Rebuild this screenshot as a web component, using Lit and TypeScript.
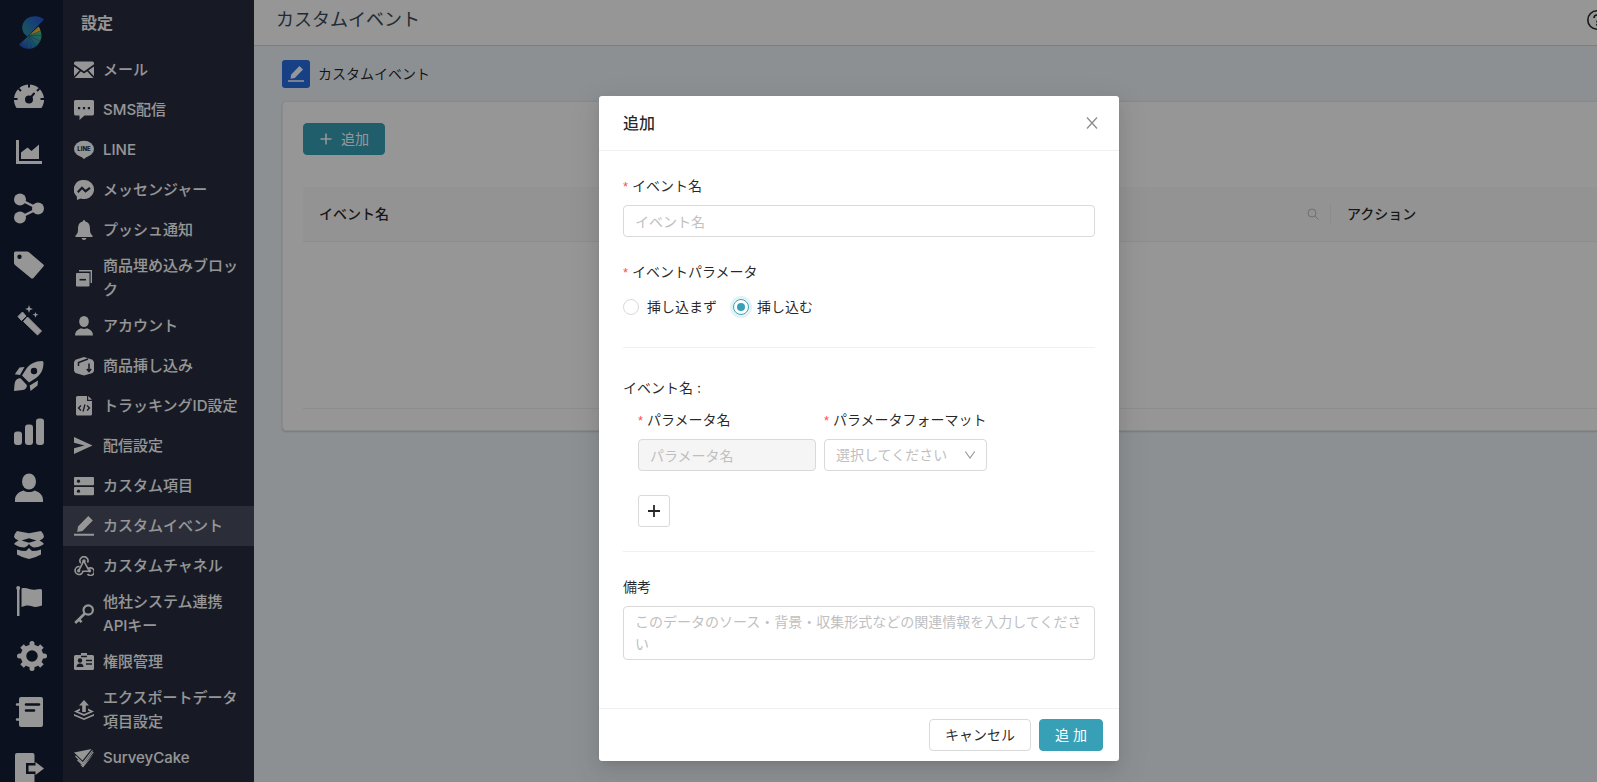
import { LitElement, html, css, svg } from "lit";
import { customElement, property, state } from "lit/decorators.js";

/* Glyphs: "cut" parts take the colour of the surface behind the icon. */
const rail = {
  gauge: svg`<path d="M2.600 27A15 15 0 1 1 27.400 27Z"/><path class="cutline" stroke-width="2" d="M15 2v4.500M0 18h3.500M26.500 18H30M4.600 7.600l2.400 2.400M25.400 7.600 23 10"/><circle class="cut" cx="15" cy="18.500" r="4"/><path class="cutline" stroke-width="2" stroke-linecap="round" d="M15 18.500 20 12.500"/>`,
  area: svg`<path d="M2 3h3v21h23v3H2Z"/><path d="M7 22V15.500L13.500 10.500 17.500 14 25 7.500V22Z"/>`,
  share: svg`<circle cx="6" cy="6.500" r="6"/><circle cx="6" cy="24.500" r="6"/><circle cx="24" cy="15.500" r="6"/><path class="line" stroke-width="2.500" d="M6 6.500 24 15.500 6 24.500"/>`,
  tag: svg`<path fill-rule="evenodd" d="M1.500 2.500H13a3 3 0 0 1 2 .8L29.400 15.500a1.500 1.500 0 0 1 0 2L19.500 29a2 2 0 0 1-2.700 0L1 16a3 3 0 0 1-1-2.200V4a1.500 1.500 0 0 1 1.500-1.500ZM5.500 5.500a2.200 2.200 0 1 0 0 4.400 2.200 2.200 0 0 0 0-4.400Z"/>`,
  wand: svg`<path d="M4 11.500 8.500 7l3.500 4-4.500 4.500ZM13.500 12 27.500 26l-4 4L9.500 16.500Z" stroke="currentColor" stroke-linejoin="round"/><path d="M15 0l1 3 3 1-3 1-1 3-1-3-3-1 3-1ZM21.500 7l.8 2 2.200.8-2.200.8-.8 2.200-.8-2.200-2.200-.8 2.200-.8Z"/>`,
  rocket: svg`<path fill-rule="evenodd" d="M28 0c-7 .2-11.500 2.500-15.500 7.500L8 14.500l7 7 7-4.500C27.500 13 29.500 8 29.500 1.500Q29.500 0 28 0ZM20 6.800a3.200 3.200 0 1 1 0 6.400 3.200 3.200 0 0 1 0-6.400Z"/><path d="M10.500 6 6 14 .8 13.200 5.500 6.500ZM24 19.500l-.5 5-7 5.500-.8-5.500ZM6.500 17.200 12.800 24c.5 2.700-1.300 4.500-4 5L0 30c.3-3 .3-6 1-9 .8-2.600 3-4 5.500-3.800Z"/>`,
  bars: svg`<rect x="0" y="14.500" width="8" height="13.500" rx="3"/><rect x="11" y="7.500" width="8" height="20.500" rx="3"/><rect x="22" y="1.500" width="8" height="26.500" rx="3"/>`,
  user: svg`<ellipse cx="15" cy="8.500" rx="7" ry="8"/><path d="M1 29v-2c0-4.500 3-8 8.500-9.500 3 2 8 2 11 0C26 19 29 22.500 29 27v2Z"/>`,
  box: svg`<path fill-rule="evenodd" d="M3 2 15 4.200 27 2Q30 5 30 8 29 10 25.500 11.500 29 13 30 15 25 18.500 19.500 18.500 16.500 17.500 15 15 13.500 17.500 10.500 18.500 5 18.500 0 15 1 13 4.500 11.500 1 10 0 8 0 5 3 2ZM7.500 11.500 15 13.800l7.500-2.300L15 9.200Z"/><path d="M3 20.500q4 1.500 9 1.500l3-3 3 3q5 0 9-1.500v5q-5 3-12 4.500-7-1.500-12-4.500Z"/>`,
  flag: svg`<path d="M3 3.500h2.500V31H3Z"/><circle cx="4.200" cy="3" r="2"/><path d="M7.500 3.500C13 1.500 17 6 22 4.500l4.500-.5Q28 4 28 5.500v15c-4 1.500-7 2-10 .8-4-1.600-7-.8-10.500.7Z"/>`,
  gear: svg`<g transform="translate(3 0)"><circle class="line" stroke-width="5.500" cx="15" cy="15" r="8.500"/><path class="line" stroke-width="5" stroke-linecap="round" d="M15 2.500v3M15 24.500v3M2.500 15h3M24.500 15h3"/><path class="line" stroke-width="5" d="M5 5l4 4M21 21l4 4M25 5l-4 4M9 21l-4 4"/></g>`,
  book: svg`<rect x="5" y="0" width="24" height="30" rx="2"/><path class="line" stroke-width="2.500" stroke-linecap="round" d="M3 7.500h4M3 22.500h4"/><path class="cutline" stroke-width="2.600" stroke-linecap="round" d="M12 7.500h13M12 13.500h8"/>`,
  exit: svg`<rect x="1" y="0" width="19.500" height="31" rx="2"/><path class="cut" d="M12 10h12v11H12Z"/><path d="M14.500 12.500h7V9L30 15.500 21.500 22v-3.500h-7Z"/>`,
};

const menu = {
  mail: svg`<rect x="0" y="1.500" width="20" height="16.500" rx="1.500"/><path class="cutline" stroke-width="1.700" d="M-.5 5 10 12.500 20.500 5M0 17.500 6.500 10.500M20 17.500 13.500 10.500"/>`,
  sms: svg`<path d="M1.500 0h17Q20 0 20 1.500v12Q20 15.500 18.500 15.500H10.500L5.500 20V15.500h-4Q0 15.500 0 13.500v-12Q0 0 1.500 0Z"/><path class="cut" d="M4 7h2.200v2.200H4ZM8.900 7h2.200v2.200H8.900ZM13.800 7H16v2.200h-2.200Z"/>`,
  line: svg`<ellipse cx="10" cy="9" rx="10" ry="8.200"/><path d="M4 14 16 14.500 10 19Z"/><text class="cut brand" x="10" y="11" text-anchor="middle">LINE</text>`,
  messenger: svg`<path d="M10 0a10 9.500 0 1 1-3.200 18.500L3 20l-.2-3.600A9.600 9.500 0 0 1 10 0Z"/><path class="cutline" stroke-width="2.200" d="M3.800 12.200 8 7.800l3.500 3.400 4.500-3.400"/>`,
  bell: svg`<path d="M10 0q1.300 0 1.300 1.600C15 2.500 16 5.500 16 9c0 4 .8 5 2.500 6.500V17h-17v-1.500C3.200 14 4 13 4 9c0-3.500 1-6.500 4.700-7.400Q8.700 0 10 0ZM7.500 18h5q-.5 2-2.500 2t-2.500-2Z"/>`,
  block: svg`<rect x="2" y="5" width="13.500" height="13.500" rx="1"/><path class="line" stroke-width="1.400" d="M5 2.800H17.300V15"/><path class="cutline" stroke-width="1.600" d="M5.500 11.700h6.500"/>`,
  account: svg`<ellipse cx="10" cy="5.500" rx="4.800" ry="5.500"/><path d="M1 19.500q0-5.500 6-7.300 3 1.500 6 0 6 1.800 6 7.300Z"/>`,
  product: svg`<path d="M10 1 18.500 3.800 20 6v9L18.500 17 10 19.500 1.500 17 0 15V6L1.500 3.800Z"/><path class="cutline" stroke-width="1.500" d="M4.500 10V6.500L14 3M15 7.500v8M12.800 13l2.200 2.500 2.200-2.500"/>`,
  file: svg`<path d="M3.500 0H13v5h5v13q0 1.500-1.500 1.500h-13Q2 19.500 2 18V1.500Q2 0 3.500 0ZM14.200 0 18 3.800h-3.800Z"/><path class="cutline" stroke-width="1.300" d="M7 9.500 4.500 12 7 14.500M13 9.500 15.500 12 13 14.500M11 8.500 9 15.500"/>`,
  send: svg`<path d="M0 1 18.500 9.500 0 18V12.200L10.500 9.500 0 6.800Z"/>`,
  server: svg`<rect x="0" y="1" width="20" height="8.300" rx="1"/><rect x="0" y="11" width="20" height="8.300" rx="1"/><circle class="cut" cx="4.500" cy="5.200" r="1.600"/><circle class="cut" cx="4.500" cy="15.200" r="1.600"/>`,
  edit: svg`<path d="M3.200 16 4 10.500 14.300 0 18.800 4.500 8.500 15ZM0 17.800h20v2H0Z"/>`,
  hook: svg`<g class="line" stroke-width="1.600"><path d="M6.800 7.200a4 4 0 1 1 6.700-.6M10 5.300l4 7.500a3.800 3.800 0 1 1-.5 5.200M9.500 4.500 8.500 7.500 5 14M5.500 10.500a4 4 0 1 0 3.500 4.700h6.500"/></g><circle cx="10" cy="5" r="1.700"/><circle cx="4.700" cy="14.700" r="1.700"/><circle cx="15.500" cy="14.700" r="1.700"/>`,
  key: svg`<circle class="line" stroke-width="2.200" cx="14.200" cy="6" r="4.700"/><path class="line" stroke-width="2.600" d="M10.800 9.500 1.200 19M5 15.500l2.600 2.600"/>`,
  badge: svg`<path d="M1.500 3H7V1h6v2h5.500Q20 3 20 4.500v12q0 1.500-1.500 1.500h-17Q0 18 0 16.500v-12Q0 3 1.500 3Z"/><path class="cutline" stroke-width="1.300" d="M7 4.500h6M12 8.500h6M12 12h6"/><circle class="cut" cx="6" cy="8.500" r="2.200"/><path class="cut" d="M2.500 15q0-3.500 3.500-3.500T9.500 15Z"/>`,
  export: svg`<path d="M10 0 15 5.500H11.800V12H8.200V5.500H5Z"/><path d="M6 8.500 0 11.500 10 16l10-4.500-6-3v2L16 11.500 10 14 4 11.500 6 10.500Z"/><path d="M0 14l10 4.300L20 14v1.800L10 20 0 15.800Z"/>`,
  cake: svg`<path d="M0 4.500 17.500 1 8.500 12.500Z"/><path class="line" stroke-width="1.200" d="M1.500 8 8.800 15 18.500 2.500M3.500 12 9 17 19.300 4"/><path d="M6 16.500l3 1L19.800 6 9 19.500Z"/>`,
};

type MenuRow = [keyof typeof menu, string];

const MENU: MenuRow[] = [
  ["mail", "メール"],
  ["sms", "SMS配信"],
  ["line", "LINE"],
  ["messenger", "メッセンジャー"],
  ["bell", "プッシュ通知"],
  ["block", "商品埋め込みブロック"],
  ["account", "アカウント"],
  ["product", "商品挿し込み"],
  ["file", "トラッキングID設定"],
  ["send", "配信設定"],
  ["server", "カスタム項目"],
  ["edit", "カスタムイベント"],
  ["hook", "カスタムチャネル"],
  ["key", "他社システム連携APIキー"],
  ["badge", "権限管理"],
  ["export", "エクスポートデータ項目設定"],
  ["cake", "SurveyCake"],
];

const RAIL: [keyof typeof rail, string][] = [
  ["gauge", "ダッシュボード"],
  ["area", "分析"],
  ["share", "ジャーニー"],
  ["tag", "タグ"],
  ["wand", "パーソナライズ"],
  ["rocket", "配信"],
  ["bars", "レポート"],
  ["user", "ユーザー"],
  ["box", "商品"],
  ["flag", "キャンペーン"],
  ["gear", "設定"],
  ["book", "ガイド"],
  ["exit", "ログアウト"],
];

const base = css`
  *,
  *::before,
  *::after {
    box-sizing: border-box;
  }
  :host {
    font-family: Inter, "Noto Sans CJK JP", sans-serif;
    font-size: 14px;
    line-height: 22px;
    color: rgba(0, 0, 0, 0.85);
  }
  button,
  input,
  select,
  textarea {
    font: inherit;
    color: inherit;
    margin: 0;
  }
  button {
    cursor: pointer;
  }
  svg {
    display: block;
    flex: none;
    fill: currentColor;
  }
  .line {
    fill: none;
    stroke: currentColor;
  }
  .cut {
    fill: var(--surface);
  }
  .cutline {
    fill: none;
    stroke: var(--surface);
  }
  .primary {
    background: #38a0b6;
    border-color: #38a0b6;
    color: #fff;
  }
  .btn {
    height: 32px;
    padding: 0 15px;
    border-width: 1px;
    border-style: solid;
    border-radius: 4px;
  }
`;

@customElement("side-nav")
export class SideNav extends LitElement {
  @property() active = "";

  static styles = [
    base,
    css`
      :host {
        display: flex;
        height: 100%;
        color: #fff;
      }
      .rail {
        --surface: #131d34;
        width: 63px;
        background: var(--surface);
        overflow: hidden;
      }
      .logo {
        padding: 15px 0 0 18px;
        height: 68px;
      }
      .rail a {
        display: flex;
        align-items: center;
        height: 56px;
        padding-left: 14px;
        color: inherit;
      }
      .rail svg {
        overflow: visible;
      }
      .menu {
        --surface: #272d40;
        width: 191px;
        background: var(--surface);
        overflow: hidden;
      }
      h2 {
        margin: 0;
        padding: 12px 18px 16px;
        font-size: 16px;
        line-height: 22px;
        font-weight: 700;
      }
      .menu a {
        display: flex;
        align-items: center;
        gap: 9px;
        min-height: 40px;
        padding: 4px 8px 4px 11px;
        font-size: 15px;
        line-height: 24px;
        font-weight: 500;
        color: inherit;
        text-decoration: none;
      }
      .menu a.active {
        --surface: #4a4f60;
        background: var(--surface);
      }
      .brand {
        font: 800 6px Inter, sans-serif;
      }
    `,
  ];

  render() {
    return html`
      <nav class="rail" aria-label="メイン">
        <div class="logo">
          <svg width="27" height="35" viewBox="0 0 27 35">
            <defs>
              <linearGradient id="top" x1="0" y1="1" x2="1" y2="0">
                <stop offset="0.2" stop-color="#2c8ea8" />
                <stop offset="0.9" stop-color="#2458d8" />
              </linearGradient>
              <linearGradient id="low" x1="0" y1="1" x2="1" y2="0">
                <stop offset="0.1" stop-color="#2450cc" />
                <stop offset="0.5" stop-color="#2b8fb4" />
                <stop offset="1" stop-color="#58c070" />
              </linearGradient>
            </defs>
            <path fill="url(#top)" d="M26 4.500C22 .5 14 0 9 3.500 2.500 8.500 2.500 17.500 9.500 21.500Z" />
            <path fill="#e8b83c" d="M20.500 11.500 11 20.500 22.500 15.800Q22 13 20.500 11.500Z" />
            <path fill="url(#low)" d="M22.500 15.800 11 20.500 1 29.500C5 34.500 13 35.500 18.500 31 23.500 26.500 24.500 20.500 22.500 15.800Z" />
            <path fill="none" stroke="#1c5c8c" stroke-width="0.500" d="M11 20.500 23.500 20.500M11 20.500 22 26M11 20.500 18 31.500M11 20.500 13.500 33.500M11 20.500 8 33.500" />
          </svg>
        </div>
        ${RAIL.map(
          ([icon, label]) => html`<a href="#${icon}" aria-label=${label}>
            <svg width="30" height="30" viewBox="0 0 30 30">${rail[icon]}</svg>
          </a>`
        )}
      </nav>
      <nav class="menu" aria-label="設定">
        <h2>設定</h2>
        ${MENU.map(
          ([icon, label]) => html`<a href="#${icon}" class=${icon === this.active ? "active" : ""}>
            <svg width="20" height="20" viewBox="0 0 20 20">${menu[icon]}</svg>
            <span>${label}</span>
          </a>`
        )}
      </nav>
    `;
  }
}

@customElement("event-list")
export class EventList extends LitElement {
  static styles = [
    base,
    css`
      :host {
        display: block;
      }
      header {
        display: flex;
        align-items: center;
        justify-content: space-between;
        height: 46px;
        padding: 0 111px 6px 22px;
        background: #fff;
        border-bottom: 1px solid #cfd6da;
      }
      h1 {
        margin: 0;
        font-size: 18px;
        line-height: 26px;
        font-weight: 400;
        color: #3a4a57;
      }
      main {
        padding: 14px 28px;
      }
      .crumb {
        display: flex;
        align-items: center;
        gap: 8px;
        margin-bottom: 13px;
      }
      .chip {
        display: grid;
        place-items: center;
        width: 28px;
        height: 28px;
        border-radius: 3px;
        background: #2a6fe2;
        color: #fff;
      }
      .card {
        padding: 21px 20px;
        background: #fff;
        border: 1px solid #e6eaec;
        border-radius: 4px;
        box-shadow: 0 1px 2px rgba(0, 0, 0, 0.16);
      }
      .add {
        display: flex;
        align-items: center;
        gap: 8px;
        margin-bottom: 32px;
      }
      table {
        width: 100%;
        border-collapse: separate;
        border-spacing: 0;
        table-layout: fixed;
      }
      th {
        height: 55px;
        padding: 16px;
        background: #fafafa;
        border-bottom: 1px solid #f0f0f0;
        font-weight: 500;
        text-align: left;
      }
      th:first-child {
        border-top-left-radius: 4px;
      }
      th:last-child {
        border-top-right-radius: 4px;
      }
      .action {
        width: 338px;
      }
      .split {
        display: flex;
        align-items: center;
        justify-content: space-between;
        margin-right: -16px;
        padding-right: 11px;
        border-right: 1px solid #f0f0f0;
      }
      .split svg {
        color: #bfbfbf;
      }
      td {
        height: 167px;
        border-bottom: 1px solid #f0f0f0;
      }
    `,
  ];

  render() {
    return html`
      <header>
        <h1>カスタムイベント</h1>
        <svg width="20" height="20" viewBox="0 0 20 20">
          <circle class="line" stroke-width="1.600" cx="10" cy="10" r="9.200" />
          <path class="line" stroke-width="1.600" d="M7 8q0-3 3-3t3 2.600q0 1.400-1.600 2.400T10 12.500" />
          <circle cx="10" cy="14.800" r="1" />
        </svg>
      </header>
      <main>
        <div class="crumb">
          <span class="chip"><svg width="16" height="16" viewBox="0 0 20 20">${menu.edit}</svg></span>
          <span>カスタムイベント</span>
        </div>
        <section class="card">
          <button class="btn primary add" type="button">
            <svg width="14" height="14" viewBox="0 0 14 14"><path class="line" stroke-width="1.600" d="M7 1.500v11M1.500 7h11" /></svg>
            <span>追加</span>
          </button>
          <table>
            <thead>
              <tr>
                <th>
                  <div class="split">
                    <span>イベント名</span>
                    <svg width="12" height="12" viewBox="0 0 12 12">
                      <circle class="line" cx="5" cy="5" r="4" />
                      <path class="line" d="M8 8l3.500 3.500" />
                    </svg>
                  </div>
                </th>
                <th class="action">アクション</th>
              </tr>
            </thead>
            <tbody>
              <tr><td colspan="2"></td></tr>
            </tbody>
          </table>
        </section>
      </main>
    `;
  }
}

@customElement("event-dialog")
export class EventDialog extends LitElement {
  @state() private insert = true;

  static styles = [
    base,
    css`
      :host {
        display: block;
        width: 520px;
        background: #fff;
        border-radius: 3px;
        box-shadow: 0 3px 6px -4px rgba(0, 0, 0, 0.12), 0 6px 16px rgba(0, 0, 0, 0.08),
          0 9px 28px 8px rgba(0, 0, 0, 0.05);
      }
      header {
        display: flex;
        align-items: center;
        justify-content: space-between;
        height: 55px;
        padding: 0 16px 0 24px;
        border-bottom: 1px solid #f0f0f0;
      }
      h2 {
        margin: 0;
        font-size: 16px;
        font-weight: 500;
      }
      .close {
        display: grid;
        place-items: center;
        width: 22px;
        height: 22px;
        padding: 0;
        border: 0;
        background: none;
        color: rgba(0, 0, 0, 0.45);
      }
      form {
        padding: 24px 24px 48px;
      }
      .field {
        display: flex;
        flex-direction: column;
        gap: 8px;
        min-width: 0;
        margin: 0 0 24px;
        padding: 0;
        border: 0;
      }
      legend {
        padding: 0 0 8px;
      }
      .required::before {
        content: "*";
        display: inline-block;
        width: 5px;
        margin-right: 4px;
        font-family: "Liberation Sans", sans-serif;
        font-size: 13px;
        line-height: 1;
        color: #ff4d4f;
      }
      .control {
        display: block;
        width: 100%;
        height: 32px;
        padding: 4px 11px;
        border: 1px solid #d9d9d9;
        border-radius: 4px;
        background: #fff;
        outline: none;
      }
      .control::placeholder {
        color: #bfbfbf;
        opacity: 1;
      }
      .control:disabled {
        background: #f5f5f5;
      }
      textarea.control {
        height: 54px;
        resize: none;
        overflow: hidden;
      }
      .radios {
        display: flex;
        align-items: center;
        gap: 16px;
        height: 32px;
      }
      .radios label {
        display: flex;
        align-items: center;
        gap: 8px;
      }
      .radios input {
        appearance: none;
        display: grid;
        place-items: center;
        width: 16px;
        height: 16px;
        border: 1px solid #d9d9d9;
        border-radius: 50%;
      }
      .radios input:checked {
        border-color: #38a0b6;
        box-shadow: 0 0 0 3px rgba(56, 160, 182, 0.14);
      }
      .radios input:checked::before {
        content: "";
        width: 8px;
        height: 8px;
        border-radius: 50%;
        background: #38a0b6;
      }
      hr {
        height: 1px;
        margin: 24px 0;
        border: 0;
        background: #f0f0f0;
      }
      .group {
        margin: 0;
        padding: 5px 0 10px;
      }
      .params {
        display: grid;
        grid-template-columns: 178px 163px;
        gap: 8px;
        padding-left: 15px;
        white-space: nowrap;
      }
      .select {
        position: relative;
      }
      .select select {
        appearance: none;
        color: #bfbfbf;
      }
      .select svg {
        position: absolute;
        right: 11px;
        top: 10px;
        color: rgba(0, 0, 0, 0.4);
        pointer-events: none;
      }
      .plus {
        display: grid;
        place-items: center;
        width: 32px;
        height: 32px;
        margin-left: 15px;
        padding: 0;
        border: 1px solid #d9d9d9;
        border-radius: 3px;
        background: #fff;
      }
      footer {
        display: flex;
        justify-content: flex-end;
        gap: 8px;
        padding: 10px 16px;
        border-top: 1px solid #f0f0f0;
      }
      .plain {
        background: #fff;
        border-color: #d9d9d9;
      }
      .memo {
        margin: 0;
      }
    `,
  ];

  render() {
    return html`
      <header>
        <h2>追加</h2>
        <button class="close" type="button" aria-label="閉じる">
          <svg width="12" height="12" viewBox="0 0 12 12"><path class="line" stroke-width="1.300" d="M1 .5l10 11M11 .5L1 11.500" /></svg>
        </button>
      </header>
      <form>
        <div class="field">
          <label class="required" for="name">イベント名</label>
          <input class="control" id="name" type="text" placeholder="イベント名" />
        </div>
        <fieldset class="field">
          <legend class="required">イベントパラメータ</legend>
          <div class="radios">
            <label><input type="radio" name="insert" .checked=${!this.insert} @change=${() => (this.insert = false)} />挿し込まず</label>
            <label><input type="radio" name="insert" .checked=${this.insert} @change=${() => (this.insert = true)} />挿し込む</label>
          </div>
        </fieldset>
        <hr />
        <p class="group">イベント名 :</p>
        <div class="params">
          <div class="field">
            <label class="required" for="param">パラメータ名</label>
            <input class="control" id="param" type="text" placeholder="パラメータ名" disabled />
          </div>
          <div class="field">
            <label class="required" for="format">パラメータフォーマット</label>
            <div class="select">
              <select class="control" id="format">
                <option>選択してください</option>
              </select>
              <svg width="12" height="12" viewBox="0 0 12 12"><path class="line" stroke-width="1.200" d="M1.300 2.500 6 9 10.700 2.500" /></svg>
            </div>
          </div>
        </div>
        <button class="plus" type="button" aria-label="パラメータを追加">
          <svg width="14" height="14" viewBox="0 0 14 14"><path class="line" stroke-width="1.800" d="M7 1v12M1 7h12" /></svg>
        </button>
        <hr />
        <div class="field memo">
          <label for="memo">備考</label>
          <textarea class="control" id="memo" placeholder="このデータのソース・背景・収集形式などの関連情報を入力してください"></textarea>
        </div>
      </form>
      <footer>
        <button class="btn plain" type="button">キャンセル</button>
        <button class="btn primary" type="button">追 加</button>
      </footer>
    `;
  }
}

@customElement("app-root")
export class AppRoot extends LitElement {
  static styles = [
    base,
    css`
      :host {
        display: block;
        height: 100vh;
        overflow: hidden;
      }
      .page {
        position: relative;
        display: flex;
        width: calc(100% + 121px);
        height: 100%;
        background: #eff5fa;
      }
      event-list {
        flex: 1;
        min-width: 0;
      }
      .mask {
        position: absolute;
        inset: 0;
        display: flex;
        justify-content: center;
        align-items: flex-start;
        padding-top: 96px;
        background: rgba(0, 0, 0, 0.41);
      }
    `,
  ];

  render() {
    return html`
      <div class="page">
        <side-nav active="edit"></side-nav>
        <event-list></event-list>
        <div class="mask">
          <event-dialog role="dialog" aria-modal="true" aria-label="追加"></event-dialog>
        </div>
      </div>
    `;
  }
}
